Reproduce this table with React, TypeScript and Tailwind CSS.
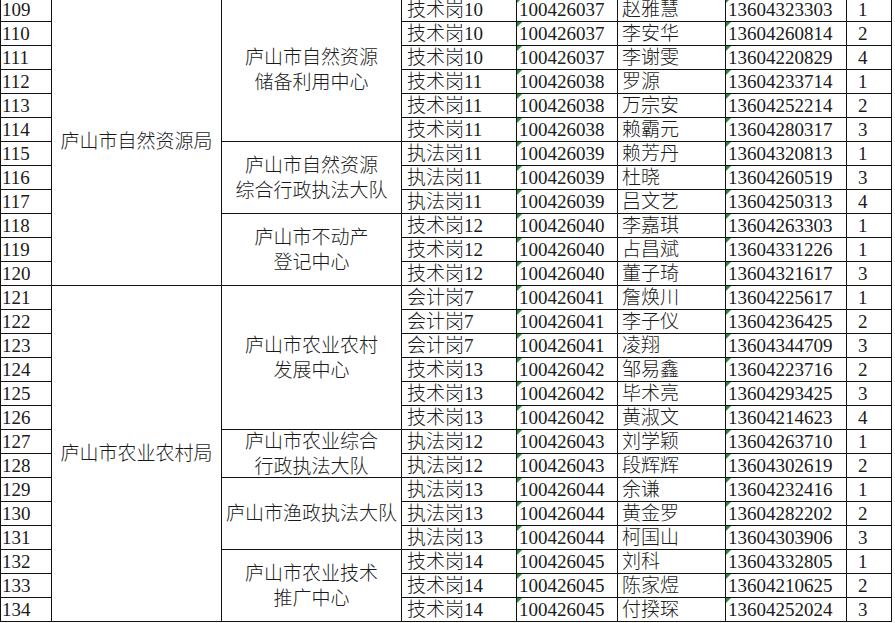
import React from "react";

type Row = [number, string, string, string, string, number];

const rows: Row[] = [
  [109, "技术岗10", "100426037", "赵雅慧", "13604323303", 1],
  [110, "技术岗10", "100426037", "李安华", "13604260814", 2],
  [111, "技术岗10", "100426037", "李谢雯", "13604220829", 4],
  [112, "技术岗11", "100426038", "罗源", "13604233714", 1],
  [113, "技术岗11", "100426038", "万宗安", "13604252214", 2],
  [114, "技术岗11", "100426038", "赖霸元", "13604280317", 3],
  [115, "执法岗11", "100426039", "赖芳丹", "13604320813", 1],
  [116, "执法岗11", "100426039", "杜晓", "13604260519", 3],
  [117, "执法岗11", "100426039", "吕文艺", "13604250313", 4],
  [118, "技术岗12", "100426040", "李嘉琪", "13604263303", 1],
  [119, "技术岗12", "100426040", "占昌斌", "13604331226", 1],
  [120, "技术岗12", "100426040", "董子琦", "13604321617", 3],
  [121, "会计岗7", "100426041", "詹焕川", "13604225617", 1],
  [122, "会计岗7", "100426041", "李子仪", "13604236425", 2],
  [123, "会计岗7", "100426041", "凌翔", "13604344709", 3],
  [124, "技术岗13", "100426042", "邹易鑫", "13604223716", 2],
  [125, "技术岗13", "100426042", "毕术亮", "13604293425", 3],
  [126, "技术岗13", "100426042", "黄淑文", "13604214623", 4],
  [127, "执法岗12", "100426043", "刘学颖", "13604263710", 1],
  [128, "执法岗12", "100426043", "段辉辉", "13604302619", 2],
  [129, "执法岗13", "100426044", "余谦", "13604232416", 1],
  [130, "执法岗13", "100426044", "黄金罗", "13604282202", 2],
  [131, "执法岗13", "100426044", "柯国山", "13604303906", 3],
  [132, "技术岗14", "100426045", "刘科", "13604332805", 1],
  [133, "技术岗14", "100426045", "陈家煜", "13604210625", 2],
  [134, "技术岗14", "100426045", "付揆琛", "13604252024", 3],
];

const cell = "border-r border-b border-[#111] leading-[24px] whitespace-nowrap overflow-hidden";
const merged =
  "border-r border-b border-[#111] flex flex-col items-center justify-center text-center leading-[25px] whitespace-nowrap";

function Tri() {
  return (
    <span className="absolute left-0 top-0 w-0 h-0 border-t-[5px] border-r-[5px] border-t-[#2f8a3c] border-r-transparent" />
  );
}

function DeptCell({ span, text }: { span: "a" | "b"; text: string }) {
  const cls = span === "a" ? "row-span-12" : "row-span-14";
  return (
    <div className={`${merged} ${cls}`}>
      <span>{text}</span>
    </div>
  );
}

function UnitCell({ span, lines }: { span: 2 | 3 | 6; lines: string[] }) {
  const cls = span === 2 ? "row-span-2" : span === 3 ? "row-span-3" : "row-span-6";
  return (
    <div className={`${merged} ${cls}`}>
      {lines.map((l) => (
        <span key={l}>{l}</span>
      ))}
    </div>
  );
}

const depts: Record<number, { span: "a" | "b"; text: string }> = {
  109: { span: "a", text: "庐山市自然资源局" },
  121: { span: "b", text: "庐山市农业农村局" },
};

const units: Record<number, { span: 2 | 3 | 6; lines: string[] }> = {
  109: { span: 6, lines: ["庐山市自然资源", "储备利用中心"] },
  115: { span: 3, lines: ["庐山市自然资源", "综合行政执法大队"] },
  118: { span: 3, lines: ["庐山市不动产", "登记中心"] },
  121: { span: 6, lines: ["庐山市农业农村", "发展中心"] },
  127: { span: 2, lines: ["庐山市农业综合", "行政执法大队"] },
  129: { span: 3, lines: ["庐山市渔政执法大队"] },
  132: { span: 3, lines: ["庐山市农业技术", "推广中心"] },
};

export default function App() {
  return (
    <div className="w-[895px] h-[623px] overflow-hidden bg-white text-[#1a1a1a] text-[19px] font-light font-['Liberation_Serif','Noto_Sans_CJK_SC',serif]">
      <div className="-mt-[2px] w-[892px] border-l border-[#111] grid grid-cols-[51px_170px_180px_115px_101px_108px_121px_45px] auto-rows-[24px]">
        {rows.map(([n, post, code, name, phone, rank]) => (
          <React.Fragment key={n}>
            <div className={`${cell} pl-[1px]`}>{n}</div>
            {depts[n] && <DeptCell span={depts[n].span} text={depts[n].text} />}
            {units[n] && <UnitCell span={units[n].span} lines={units[n].lines} />}
            <div className={`${cell} pl-[5px]`}>{post}</div>
            <div className={`${cell} relative pl-[2px]`}>
              <Tri />
              {code}
            </div>
            <div className={`${cell} pl-[4px]`}>{name}</div>
            <div className={`${cell} relative pl-[2px]`}>
              <Tri />
              {phone}
            </div>
            <div className={`${cell} pl-[11px]`}>{rank}</div>
          </React.Fragment>
        ))}
      </div>
    </div>
  );
}
